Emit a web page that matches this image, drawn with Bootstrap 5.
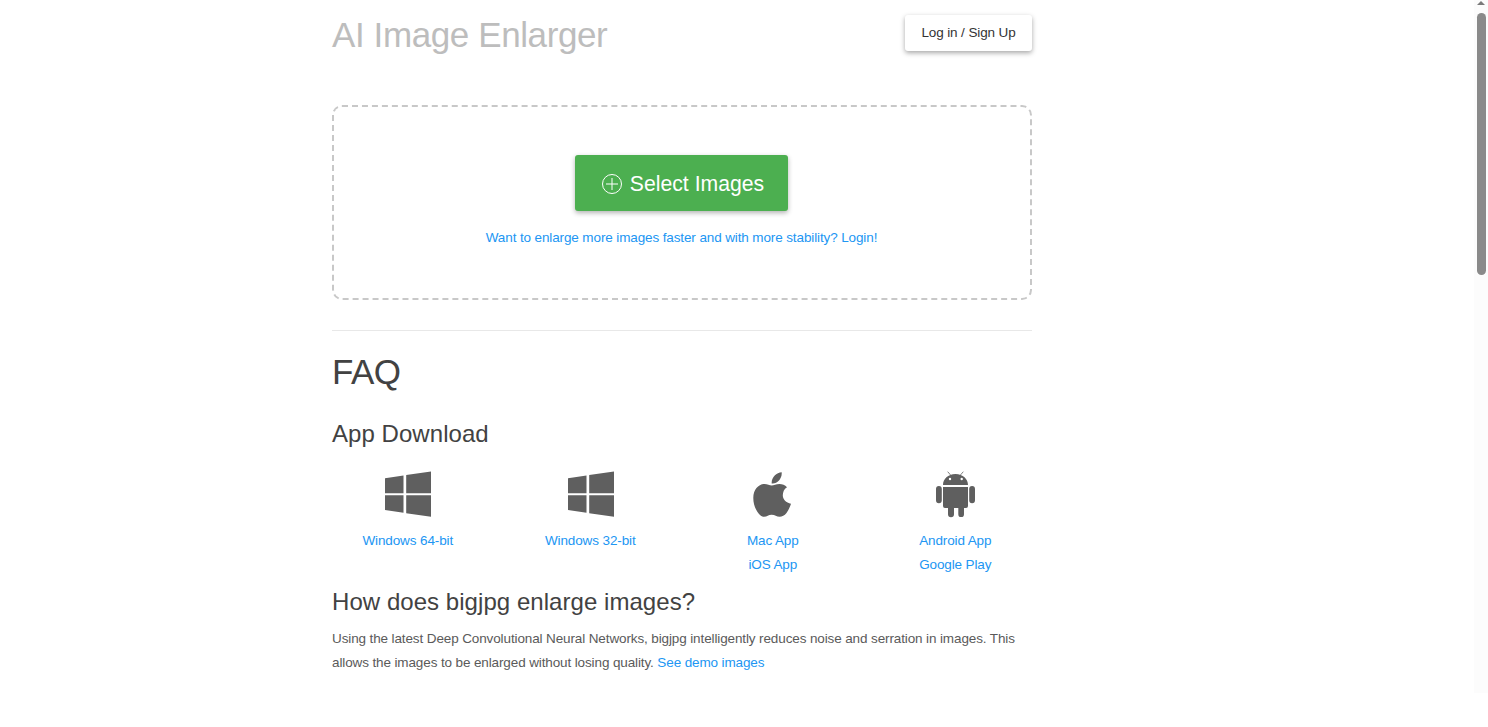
<!DOCTYPE html>
<html lang="en">
<head>
    <meta charset="UTF-8">
    <meta name="viewport" content="width=device-width, initial-scale=1.0">
    <title>AI Image Enlarger</title>
    <link href="https://cdn.jsdelivr.net/npm/bootstrap@5.3.0/dist/css/bootstrap.min.css" rel="stylesheet">
    <style>
        html, body {
            height: 100%;
            overflow: hidden;
        }
        body {
            font-family: "Liberation Sans", Arial, sans-serif;
            font-size: 13.5px;
            letter-spacing: -.12px;
            line-height: 24px;
            color: #5a5a5a;
            background: #fff;
        }
        a {
            color: #2196f3;
            text-decoration: none;
        }
        .page-wrap {
            width: 700px;
            margin-left: 332px;
        }
        .site-head {
            height: 105px;
            padding-top: 15px;
        }
        .site-title {
            font-size: 35px;
            line-height: 39px;
            letter-spacing: -.4px;
            font-weight: 400;
            color: #bdbdbd;
            margin: 0;
        }
        .login-btn {
            width: 127px;
            height: 36px;
            padding: 0;
            font-size: 13.5px;
            letter-spacing: -.12px;
            line-height: 34px;
            color: #333;
            background: #fff;
            border: 0;
            border-radius: 3px;
            box-shadow: 0 2px 5px rgba(0,0,0,.35);
        }
        .drop-zone {
            height: 195px;
            padding-top: 48px;
            border: 2px dashed #c8c8c8;
            border-radius: 10px;
        }
        .select-btn {
            width: 213px;
            height: 56px;
            padding: 1px 0 0 3px;
            margin-left: -1px;
            font-size: 21.2px;
            letter-spacing: 0;
            color: #fff;
            background: #4caf50;
            border: 0;
            border-radius: 3px;
            box-shadow: 0 2px 5px rgba(0,0,0,.3);
        }
        .select-btn:hover {
            background: #4caf50;
            color: #fff;
        }
        .login-tip {
            margin: 15px 0 0;
            padding-right: 1px;
        }
        .sep {
            margin: 30px 0 0;
            border: 0;
            border-top: 1px solid #e8e8e8;
            opacity: 1;
        }
        .faq-title {
            font-size: 35px;
            line-height: 40px;
            letter-spacing: -.5px;
            font-weight: 400;
            color: #424242;
            margin: 21px 0 0;
        }
        .sub-title {
            font-size: 24px;
            line-height: 28px;
            letter-spacing: .05px;
            font-weight: 400;
            color: #424242;
            margin: 0;
        }
        .app-row {
            --bs-gutter-x: 30px;
            margin-top: 22px;
            height: 118px;
        }
        .app-row a {
            margin-left: -1px;
        }
        .app-icon {
            display: block;
            margin: 0 auto 11px;
            width: 48px;
            height: 48px;
            fill: #5f5f5f;
        }
        .body-text {
            margin: 11px 0 0;
        }
        .fake-track {
            position: fixed;
            top: 0;
            right: 0;
            width: 14px;
            height: 693px;
            background: #fcfcfc;
        }
        .fake-thumb {
            position: absolute;
            top: 13px;
            left: 3px;
            width: 9px;
            height: 262px;
            border-radius: 5px;
            background: #8a8a8a;
        }
        .fake-arrow {
            position: absolute;
            top: 1px;
            left: 3px;
            width: 0;
            height: 0;
            border-left: 4.5px solid transparent;
            border-right: 4.5px solid transparent;
            border-bottom: 4px solid #7a7a7a;
        }
    </style>
</head>
<body>
    <div class="page-wrap">
        <div class="site-head d-flex justify-content-between align-items-start">
            <h1 class="site-title">AI Image Enlarger</h1>
            <button class="btn login-btn">Log in / Sign Up</button>
        </div>

        <div class="drop-zone text-center">
            <button class="btn select-btn d-inline-flex align-items-center justify-content-center gap-2">
                <svg width="20" height="20" viewBox="0 0 20 20" fill="none" stroke="#fff" stroke-width="1">
                    <circle cx="10" cy="10" r="9.5"/>
                    <path d="M10 4v12M4 10h12"/>
                </svg>
                <span>Select Images</span>
            </button>
            <p class="login-tip"><a href="#">Want to enlarge more images faster and with more stability? Login!</a></p>
        </div>

        <hr class="sep">

        <h1 class="faq-title">FAQ</h1>
        <h3 class="sub-title mt-4 pt-1">App Download</h3>

        <div class="row app-row text-center">
            <div class="col-3">
                <svg class="app-icon" viewBox="0 0 48 48"><path d="M1 8.200 19.500 5.500V23.300H1zM22.200 5 47 1.500V23.300H22.200zM1 25.300H19.500V42.700L1 40zM22.200 25.300H47V46.700L22.200 43.300z"/></svg>
                <a href="#">Windows 64-bit</a>
            </div>
            <div class="col-3">
                <svg class="app-icon" viewBox="0 0 48 48"><path d="M1 8.200 19.500 5.500V23.300H1zM22.200 5 47 1.500V23.300H22.200zM1 25.300H19.500V42.700L1 40zM22.200 25.300H47V46.700L22.200 43.300z"/></svg>
                <a href="#">Windows 32-bit</a>
            </div>
            <div class="col-3">
                <svg class="app-icon" viewBox="0 0 48 48"><path d="M32.700 2.300C33 6 31.700 8.500 30 10.500 28 12.700 25.500 13.800 22.700 13.500 22.400 10.400 23.800 7.500 25.700 5.500 27.500 3.600 30.300 2.500 32.700 2.300zM38 17.300C35 19 33.800 22.500 33.800 25.500 33.900 29.500 37 32.500 42 33.800 40.800 37.500 39.500 40 37.500 43 35.500 45.500 33 46.800 30.700 46.800 27.500 46.800 26 44.800 22.600 44.800 19.500 44.800 18 46.800 15 46.800 12.500 46.800 10.500 45 8.500 42 5.800 38 4.300 33 4.300 28 4.300 19.500 9.500 14 15.500 14 18.500 14 20.500 15.500 22.700 15.500 24.700 15.500 27 14 30.500 14 33.300 14 36 15 38 17.300z"/></svg>
                <a href="#">Mac App</a><br>
                <a href="#">iOS App</a>
            </div>
            <div class="col-3">
                <svg class="app-icon" viewBox="0 0 48 48" fill-rule="evenodd"><path d="M11 15C11 9 16 4 23.500 4S36 9 36 15zM18 7.800a1.200 1.200 0 1 0 0 2.400 1.200 1.200 0 0 0 0-2.400zM29.700 7.800a1.200 1.200 0 1 0 0 2.400 1.200 1.200 0 0 0 0-2.400zM11 17H36V36a2 2 0 0 1-2 2H32v6.200a2.850 2.850 0 0 1-5.700 0V38H22v6.200a3 3 0 0 1-6 0V38H13a2 2 0 0 1-2-2zM6.900 16a2.900 2.900 0 0 1 2.900 2.900V30.300a2.900 2.900 0 0 1-5.800 0V18.900A2.900 2.900 0 0 1 6.900 16zM40.100 16A2.900 2.900 0 0 1 43 18.900V30.300a2.900 2.900 0 0 1-5.800 0V18.900A2.900 2.900 0 0 1 40.100 16z"/><path d="M15.700 1.700 19 5.500M31.300 1.700 28 5.500" stroke="#5f5f5f" stroke-width=".8" fill="none"/></svg>
                <a href="#">Android App</a><br>
                <a href="#">Google Play</a>
            </div>
        </div>

        <h3 class="sub-title">How does bigjpg enlarge images?</h3>
        <p class="body-text">Using the latest Deep Convolutional Neural Networks, bigjpg intelligently reduces noise and serration in images. This allows the images to be enlarged without losing quality. <a href="#">See demo images</a></p>
    </div>

    <div class="fake-track">
        <div class="fake-arrow"></div>
        <div class="fake-thumb"></div>
    </div>

    <script src="https://cdn.jsdelivr.net/npm/bootstrap@5.3.0/dist/js/bootstrap.bundle.min.js"></script>
</body>
</html>
